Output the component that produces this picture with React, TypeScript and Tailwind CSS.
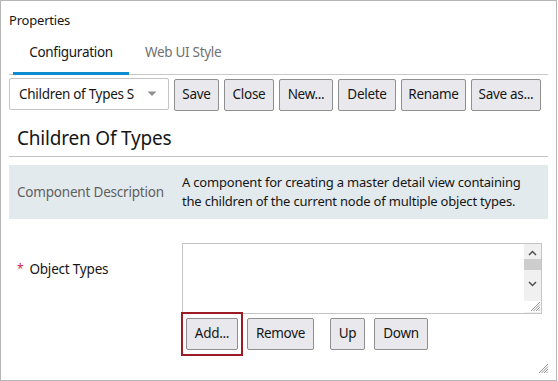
// Properties panel — "Children Of Types" component configuration

const FONT = "font-['Noto_Sans','Liberation_Sans',sans-serif]";

function Btn({ label, className = '' }: { label: string; className?: string }) {
  return (
    <button
      type="button"
      className={`h-[32px] px-0 whitespace-nowrap border border-[#8f8f8f] rounded-[2px] bg-[#e9e9ed] text-[13.5px] tracking-[-0.3px] text-[#161616] leading-none ${className}`}
    >
      {label}
    </button>
  );
}

function ResizeGrip() {
  return (
    <svg width="11" height="11" viewBox="0 0 11 11" aria-hidden="true">
      <path d="M10 1 L1 10 M10 3.5 L3.5 10 M10 6 L6 10 M10 8.5 L8.5 10" stroke="#8a8a8a" strokeWidth="0.9" />
    </svg>
  );
}

export default function App() {
  return (
    <div className={`${FONT} w-[558px] h-[381px] bg-white tracking-[-0.2px]`}>
      <div className="w-[557px] h-[381px] border border-[#b5b5b5] flex flex-col">
        <div className="px-[8px] pt-[10px] text-[13px] leading-[18px] text-[#161616]">Properties</div>

        {/* tabs */}
        <div className="mx-[8px] flex border-b border-[#c8c8c8] h-[46px] items-stretch">
          <div className="ml-[4px] w-[116px] flex items-center justify-center border-b-[3px] border-[#0f8bd0] mb-[-1px] pt-[3px] text-[13.5px] tracking-[-0.3px] text-[#161616]">
            Configuration
          </div>
          <div className="px-[16px] flex items-center pt-[4px] pb-[2px] text-[13.5px] tracking-[-0.3px] text-[#707070]">
            Web UI Style
          </div>
        </div>

        {/* toolbar */}
        <div className="mx-[8px] mt-[3px] flex items-start gap-[5px]">
          <div className="w-[160px] h-[32px] border border-[#c4c4c4] rounded-[2px] flex items-center pl-[9px] pr-[11px] text-[13.5px] tracking-[-0.3px] text-[#161616]">
            <span className="flex-1 whitespace-nowrap overflow-hidden">Children of Types S</span>
            <svg width="10" height="6" viewBox="0 0 10 6" className="ml-[6px]" aria-hidden="true">
              <path d="M0.5 0.5 L9.5 0.5 L5 5 Z" fill="#8f8f8f" />
            </svg>
          </div>
          <Btn label="Save" className="w-[45px] mt-[1px]" />
          <Btn label="Close" className="w-[50px] mt-[1px]" />
          <Btn label="New..." className="w-[54px] mt-[1px]" />
          <Btn label="Delete" className="w-[58px] mt-[1px]" />
          <Btn label="Rename" className="w-[65px] mt-[1px]" />
          <Btn label="Save as..." className="w-[70px] mt-[1px]" />
        </div>

        {/* section title */}
        <div className="mx-[8px] mt-[14px] pl-[8px] pb-[5px] border-b border-[#c4c4c4] text-[19px] leading-[26px] text-[#161616]">
          Children Of Types
        </div>

        {/* description */}
        <div className="mx-[8px] mt-[8px] h-[54px] bg-[#e3eaed] flex items-center">
          <div className="w-[173px] pl-[8px] text-[13.5px] text-[#5f5f5f]">Component Description</div>
          <div className="text-[13px] text-[#161616] leading-[19px]">
            A component for creating a master detail view containing
            <br />
            the children of the current node of multiple object types.
          </div>
        </div>

        {/* object types */}
        <div className="mx-[8px] mt-[24px] flex">
          <div className="w-[173px] pl-[8px] pt-[17px] flex items-start text-[13.5px] text-[#161616]">
            <span className="text-[#d0244c] text-[12px] mr-[6px] leading-[18px]">*</span>
            <span className="leading-[18px]">Object Types</span>
          </div>
          <div className="flex flex-col">
            <div className="w-[360px] h-[71px] border border-[#c4c4c4] flex justify-end">
              <div className="w-[17px] flex flex-col items-center bg-[#f0f0f0]">
                <svg width="9" height="6" viewBox="0 0 9 6" className="mt-[6px]" aria-hidden="true">
                  <path d="M1 5 L4.5 1.5 L8 5" stroke="#505050" strokeWidth="1.5" fill="none" />
                </svg>
                <div className="mt-[3px] w-[17px] h-[11px] bg-[#cdcdcd]" />
                <svg width="9" height="6" viewBox="0 0 9 6" className="mt-[11px]" aria-hidden="true">
                  <path d="M1 1 L4.5 4.5 L8 1" stroke="#505050" strokeWidth="1.5" fill="none" />
                </svg>
                <div className="mt-auto mb-[1px] bg-white w-[17px] flex justify-end">
                  <ResizeGrip />
                </div>
              </div>
            </div>
            <div className="mt-[-2px] flex items-start">
              <div className="ml-[-1px] px-[3px] py-[4px] border-2 border-[#9b1c24]">
                <Btn label="Add..." className="w-[52px]" />
              </div>
              <Btn label="Remove" className="w-[67px] ml-[4px] mt-[6px]" />
              <Btn label="Up" className="w-[35px] ml-[16px] mt-[6px]" />
              <Btn label="Down" className="w-[54px] ml-[9px] mt-[6px]" />
            </div>
          </div>
        </div>

        <div className="mt-auto self-end mr-[7px] mb-[6px]">
          <ResizeGrip />
        </div>
      </div>
    </div>
  );
}
